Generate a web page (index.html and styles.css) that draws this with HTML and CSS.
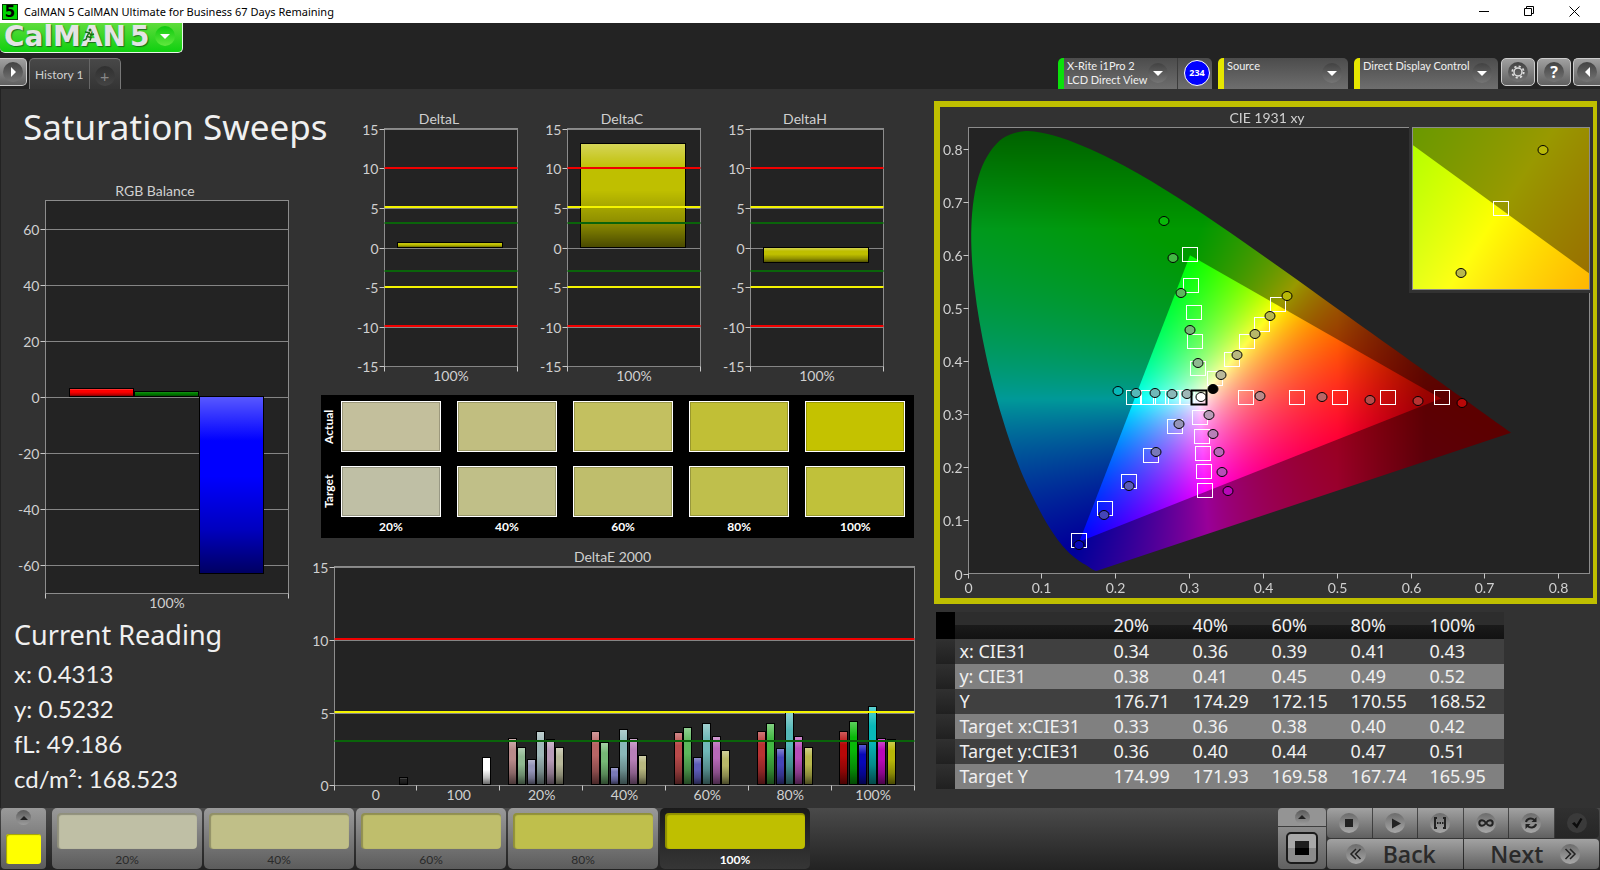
FILE: index.html
```html
<!DOCTYPE html>
<html lang="en">
<head>
    <meta charset="UTF-8">
    <meta name="viewport" content="width=device-width, initial-scale=1.0">
    <title>CalMAN 5 CalMAN Ultimate for Business 67 Days Remaining</title>
    <link rel="stylesheet" href="styles.css">
</head>
<body>
    <div class="titlebar">
        <span class="app-icon">5</span>
        <span class="app-title">CalMAN 5 CalMAN Ultimate for Business 67 Days Remaining</span>
        <div class="window-buttons">
            <button type="button" aria-label="Minimize"><svg width="11" height="11" viewBox="0 0 11 11"><path d="M0 5.5h10"/></svg></button>
            <button type="button" aria-label="Restore"><svg width="11" height="11" viewBox="0 0 11 11"><path d="M.5 2.5h7v7h-7zM2.500 2.500v-2h7v7h-2"/></svg></button>
            <button type="button" aria-label="Close"><svg width="11" height="11" viewBox="0 0 11 11"><path d="M.5.5l10 10M10.500.5l-10 10"/></svg></button>
        </div>
    </div>

    <header class="header">
        <button type="button" class="logo">
            <span class="logo-text">CalMAN</span>
            <svg class="runner" width="12" height="14" viewBox="0 0 12 14"><circle cx="7" cy="2" r="1.500"/><path d="M2 4l4 .5-2 4 4 1-1 3M6 5l2 2 3-1M4 8.500l-1 3-3 1"/></svg>
            <span class="logo-text">5</span>
            <span class="round green"><i class="arrow down"></i></span>
        </button>
        <div class="toolbar">
            <button type="button" class="square-btn first" aria-label="Show workflow"><span class="round"><i class="arrow right"></i></span></button>
            <div class="tabs">
                <button type="button" class="tab">History 1</button>
                <button type="button" class="tab add" aria-label="Add history"><span class="round faint">+</span></button>
            </div>
            <div class="devices">
                <div class="device green">
                    <button type="button" class="device-menu"><span>X-Rite i1Pro 2<br>LCD Direct View</span><span class="round"><i class="arrow down"></i></span></button>
                    <div class="device-badge"><span>234</span></div>
                </div>
                <div class="device source">
                    <button type="button" class="device-menu"><span>Source</span><span class="round"><i class="arrow down"></i></span></button>
                </div>
                <div class="device display">
                    <button type="button" class="device-menu"><span>Direct Display Control</span><span class="round"><i class="arrow down"></i></span></button>
                </div>
            </div>
            <button type="button" class="square-btn" aria-label="Settings">
                <span class="round"><svg width="14" height="14" viewBox="0 0 14 14" fill="none" stroke="#ddd"><circle cx="7" cy="7" r="4" stroke-width="1.500"/><circle cx="7" cy="7" r="5.700" stroke-width="1.800" stroke-dasharray="2.200 2.270"/></svg></span>
            </button>
            <button type="button" class="square-btn" aria-label="Help"><span class="round help">?</span></button>
            <button type="button" class="square-btn last" aria-label="Show panel"><span class="round"><i class="arrow left"></i></span></button>
        </div>
    </header>

    <main class="workspace">
        <section class="col-left">
            <h1>Saturation Sweeps</h1>
            <svg class="chart" id="rgbBalance"></svg>
            <div class="reading">
                <h2>Current Reading</h2>
                <p>x: 0.4313</p>
                <p>y: 0.5232</p>
                <p>fL: 49.186</p>
                <p>cd/m²: 168.523</p>
            </div>
        </section>

        <section class="col-middle">
            <div class="deltas">
                <svg class="chart" id="deltaL"></svg>
                <svg class="chart" id="deltaC"></svg>
                <svg class="chart" id="deltaH"></svg>
            </div>
            <div class="compare">
                <div class="compare-row">
                    <span class="row-label">Actual</span>
                    <div class="swatches">
                        <div class="swatch a20"></div>
                        <div class="swatch a40"></div>
                        <div class="swatch a60"></div>
                        <div class="swatch a80"></div>
                        <div class="swatch a100"></div>
                    </div>
                </div>
                <div class="compare-row">
                    <span class="row-label">Target</span>
                    <div class="swatches">
                        <div class="swatch t20"></div>
                        <div class="swatch t40"></div>
                        <div class="swatch t60"></div>
                        <div class="swatch t80"></div>
                        <div class="swatch t100"></div>
                    </div>
                </div>
                <div class="swatches captions">
                    <span>20%</span><span>40%</span><span>60%</span><span>80%</span><span>100%</span>
                </div>
            </div>
            <svg class="chart" id="deltaE"></svg>
        </section>

        <section class="col-right">
            <div class="cie">
                <canvas id="gamut"></canvas>
                <svg class="chart" id="cie"></svg>
            </div>
            <table class="readings">
                <thead>
                    <tr><th class="grip"></th><th></th><th>20%</th><th>40%</th><th>60%</th><th>80%</th><th>100%</th></tr>
                </thead>
                <tbody>
                    <tr><td class="grip"></td><th>x: CIE31</th><td>0.34</td><td>0.36</td><td>0.39</td><td>0.41</td><td>0.43</td></tr>
                    <tr><td class="grip"></td><th>y: CIE31</th><td>0.38</td><td>0.41</td><td>0.45</td><td>0.49</td><td>0.52</td></tr>
                    <tr><td class="grip"></td><th>Y</th><td>176.71</td><td>174.29</td><td>172.15</td><td>170.55</td><td>168.52</td></tr>
                    <tr><td class="grip"></td><th>Target x:CIE31</th><td>0.33</td><td>0.36</td><td>0.38</td><td>0.40</td><td>0.42</td></tr>
                    <tr><td class="grip"></td><th>Target y:CIE31</th><td>0.36</td><td>0.40</td><td>0.44</td><td>0.47</td><td>0.51</td></tr>
                    <tr><td class="grip"></td><th>Target Y</th><td>174.99</td><td>171.93</td><td>169.58</td><td>167.74</td><td>165.95</td></tr>
                </tbody>
            </table>
        </section>
    </main>

    <footer class="bottombar">
        <button type="button" class="current" aria-label="Current pattern"><span class="round small"><i class="arrow up"></i></span><span class="current-color"></span></button>
        <div class="patterns">
            <button type="button" class="pattern"><span class="chip t20"></span>20%</button>
            <button type="button" class="pattern"><span class="chip t40"></span>40%</button>
            <button type="button" class="pattern"><span class="chip t60"></span>60%</button>
            <button type="button" class="pattern"><span class="chip t80"></span>80%</button>
            <button type="button" class="pattern active"><span class="chip full"></span>100%</button>
        </div>
        <div class="pattern-window">
            <button type="button" class="window-up" aria-label="Pattern options"><span class="round small"><i class="arrow up"></i></span></button>
            <button type="button" class="window-size" aria-label="Pattern window"><span></span></button>
        </div>
        <div class="controls">
            <div class="control-row">
                <button type="button" aria-label="Stop"><svg class="disc" viewBox="0 0 20 20"><path d="M6 6h8v8H6z"/></svg></button>
                <button type="button" aria-label="Read"><svg class="disc" viewBox="0 0 20 20"><path d="M7 5.500l9 5-9 5z"/></svg></button>
                <button type="button" aria-label="Read series"><svg class="disc" viewBox="0 0 20 20"><path class="line" d="M7 5H5v10h2M13 5h2v10h-2M7 10h1.500M9.500 10h1.500M12 10h1.500"/></svg></button>
                <button type="button" aria-label="Read continuous"><svg class="disc" viewBox="0 0 20 20"><path class="line" d="M10 10C8.500 8 7.500 7.300 6 7.300a2.700 2.700 0 0 0 0 5.400c1.500 0 2.500-.7 4-2.700s2.500-2.700 4-2.700a2.700 2.700 0 0 1 0 5.400c-1.500 0-2.500-.7-4-2.700z"/></svg></button>
                <button type="button" aria-label="Refresh"><svg class="disc" viewBox="0 0 20 20"><path class="line" d="M5 9c.5-3 5-5 8.500-2M15 11c-.5 3-5 5-8.500 2"/><path d="M15.500 4v5h-5zM4.500 16v-5h5z"/></svg></button>
                <button type="button" class="dark" aria-label="Done"><svg class="disc" viewBox="0 0 20 20"><path d="M5 10.500l2.500-1.500 2 2.500L13.500 5l2 1-5.500 9.500z"/></svg></button>
            </div>
            <div class="control-row nav">
                <button type="button"><svg class="disc" viewBox="0 0 20 20"><path class="thin" d="M10 5l-5 5 5 5M14.500 5l-5 5 5 5"/></svg>Back</button>
                <button type="button">Next<svg class="disc" viewBox="0 0 20 20"><path class="thin" d="M5.500 5l5 5-5 5M10 5l5 5-5 5"/></svg></button>
            </div>
        </div>
    </footer>

    <script src="charts.js"></script>
</body>
</html>
```
FILE: styles.css
```css
* {
    box-sizing: border-box;
}
body {
    margin: 0;
    min-height: 100vh;
    display: flex;
    flex-direction: column;
    background: #323232;
    color: #f0f0f0;
    font-family: Lato, "Open Sans", sans-serif;
    font-size: 14px;
}
button {
    border: none;
    padding: 0;
    margin: 0;
    background: none;
    color: inherit;
    font: inherit;
    cursor: pointer;
}

/* window title */
.titlebar {
    display: flex;
    align-items: center;
    height: 23px;
    padding: 0 3px 0 2px;
    background: #fff;
    color: #000;
    font: 11px "Noto Sans", sans-serif;
}
.app-icon {
    width: 16px;
    height: 16px;
    margin-right: 6px;
    background: #00d800;
    border: 1px solid #033f03;
    font: bold 15px/14px "DejaVu Sans", sans-serif;
    text-align: center;
}
.window-buttons {
    margin-left: auto;
    display: flex;
}
.window-buttons button {
    width: 45px;
    height: 21px;
    display: flex;
    align-items: center;
    justify-content: center;
}
.window-buttons svg {
    fill: none;
    stroke: #000;
}

/* header */
.header {
    background: #232323;
    height: 66px;
    display: flex;
    flex-direction: column;
    justify-content: space-between;
    align-items: flex-start;
}
.logo {
    position: relative;
    width: 183px;
    height: 30px;
    padding: 0 7px 3px 4px;
    display: flex;
    align-items: center;
    background: linear-gradient(#5fdc3c, #0fd00f);
    border: solid #e8f5e8;
    border-width: 0 1px 1px 0;
    border-radius: 0 0 5px 5px;
}
.logo-text {
    font: bold 28px/27px "DejaVu Sans", sans-serif;
    margin-right: 4px;
    color: #e4e4e4;
    text-shadow: 1px 1px 1px #1c6e1c;
}
.logo .round {
    margin-left: auto;
}
.runner {
    position: absolute;
    left: 83px;
    top: 5px;
    fill: #187018;
    stroke: none;
}
.runner path {
    fill: none;
    stroke: #187018;
    stroke-width: 1.5;
}
.round {
    width: 20px;
    height: 20px;
    border-radius: 50%;
    display: flex;
    align-items: center;
    justify-content: center;
    background: linear-gradient(#424242, #757575);
    flex: none;
}
.round.green {
    background: linear-gradient(#0cc90c, #62e83e);
}
.round.faint {
    background: linear-gradient(#303030, #444);
    color: #888;
    font-size: 16px;
}
.round.help {
    font: bold 16px "Noto Sans", sans-serif;
    color: #fff;
}
.round.small {
    width: 15px;
    height: 15px;
    background: linear-gradient(#5a5a5a, #9c9c9c);
}
.arrow {
    border: 5px solid transparent;
}
.arrow.down {
    border-top-color: #fff;
    border-bottom-width: 0;
}
.arrow.up {
    border-width: 0 4px 4px;
    border-bottom-color: #222;
}
.arrow.right {
    border-left-color: #fff;
    border-right-width: 0;
}
.arrow.left {
    border-right-color: #fff;
    border-left-width: 0;
}
.toolbar {
    display: flex;
    width: 100%;
    height: 31px;
    align-items: flex-start;
    overflow: hidden;
}
.square-btn {
    width: 34px;
    height: 28px;
    margin-left: 2px;
    display: flex;
    align-items: center;
    justify-content: center;
    border: 1px solid #ccc;
    border-radius: 5px;
    background: linear-gradient(#a0a0a0, #606060);
    flex: none;
}
.square-btn.first {
    width: 27px;
    margin: 0 2px 0 0;
    border-left: none;
    border-radius: 0 5px 5px 0;
}
.square-btn.last {
    width: 27px;
    border-right: none;
    border-radius: 5px 0 0 5px;
}
.tabs {
    display: flex;
    height: 31px;
    border: solid #777;
    border-width: 1px 1px 0;
    border-radius: 5px 5px 0 0;
    background: linear-gradient(#484848, #343434);
    color: #d0d0d0;
    font-size: 12px;
}
.tab {
    padding: 0 5px;
}
.tab.add {
    width: 31px;
    border-left: 1px solid #666;
    padding: 3px 5px 0;
}
.devices {
    margin-left: auto;
    display: flex;
    gap: 6px;
    height: 31px;
    font-size: 11px;
    line-height: 14px;
}
.device {
    display: flex;
    border-left: 6px solid #e6e600;
    border-radius: 5px 5px 0 0;
    background: linear-gradient(#4c4c4c, #6e6e6e);
}
.device.green {
    width: 154px;
    border-left-color: #0be00b;
}
.device.source {
    width: 130px;
}
.device.display {
    width: 144px;
    margin-right: 1px;
}
.device-menu {
    flex: 1;
    display: flex;
    justify-content: space-between;
    align-items: flex-start;
    text-align: left;
    white-space: nowrap;
    padding: 1px 6px 0 3px;
}
.device-menu .round {
    margin-top: 4px;
}
.device.green .device-menu {
    padding-right: 9px;
}
.device-badge {
    width: 35px;
    padding: 2px 2px 2px 6px;
    border-left: 1px solid #3c3c3c;
}
.device-badge span {
    display: block;
    width: 26px;
    height: 26px;
    border: 1px solid #fff;
    border-radius: 50%;
    background: #00f;
    color: #fff;
    font: bold 9px/24px "Open Sans", sans-serif;
    text-align: center;
}

/* workspace */
.workspace {
    flex: 1;
    display: grid;
    grid-template-columns: 320fr 614fr 666fr;
    border-left: 1px solid #222;
}
.workspace section {
    display: flex;
    flex-direction: column;
    min-width: 0;
}
h1, h2, p {
    margin: 0;
    font-weight: normal;
}
h1, h2 {
    font-family: "Noto Sans", "Open Sans", sans-serif;
}
h1 {
    font-size: 35px;
    line-height: 44px;
    padding: 16px 0 0 22px;
    height: 89px;
    white-space: nowrap;
}
.chart {
    display: block;
    width: 100%;
    height: 0;
    flex: 1;
    overflow: visible;
}
.reading {
    height: 194px;
    padding: 3px 0 0 13px;
    font-size: 24px;
    line-height: 35px;
}
.reading h2 {
    font-size: 27px;
    line-height: 35px;
    margin-bottom: 4px;
}
.col-middle {
    padding-top: 19px;
}
.deltas {
    flex: 280 1 0;
    display: grid;
    grid-template-columns: repeat(3, 1fr);
    padding: 0 50px 0 15px;
}
.deltas .chart {
    height: 100%;
}
#deltaE {
    flex: 263 1 0;
}
.compare {
    margin: 7px 20px 7px 0;
    padding: 6px 9px 6px 0;
    background: #000;
    color: #fff;
    font-size: 12px;
    font-weight: bold;
}
.compare-row {
    display: flex;
    height: 51px;
    margin-bottom: 14px;
}
.compare-row + .compare-row {
    margin-bottom: 2px;
}
.row-label {
    width: 20px;
    writing-mode: vertical-rl;
    transform: rotate(180deg);
    text-align: center;
    line-height: 16px;
}
.swatches {
    flex: 1;
    display: grid;
    grid-template-columns: repeat(5, 1fr);
    gap: 16px;
}
.swatch {
    border: 1px solid #fff;
    box-shadow: inset 0 0 0 1px rgba(0, 0, 0, .2);
}
.captions {
    padding-left: 20px;
    text-align: center;
    line-height: 15px;
    height: 13px;
}
.a20 { background: #c3bf9c; }
.a40 { background: #c1be80; }
.a60 { background: #c3c060; }
.a80 { background: #c1bf36; }
.a100 { background: #c4c200; }
.t20 { background: #bfbfa5; }
.t40 { background: #c0bf88; }
.t60 { background: #bfbe6c; }
.t80 { background: #bfbf4c; }
.t100 { background: #c0c13a; }
.full { background: #bfbf00; }

.col-right {
    padding: 12px 3px 19px 0;
}
.cie {
    position: relative;
    flex: 1;
    display: flex;
    border: 6px solid #bfbf00;
    border-right-width: 4px;
}
.cie canvas {
    position: absolute;
    inset: 0;
}
.cie .chart {
    position: relative;
    height: auto;
}
.readings {
    width: 568px;
    margin: 8px 0 0 2px;
    border-collapse: collapse;
    table-layout: fixed;
    font: 18px/24px "Noto Sans", sans-serif;
}
.readings th,
.readings td {
    height: 25px;
    padding: 0 0 1px 4px;
    font-weight: normal;
    text-align: left;
    width: 79px;
    white-space: nowrap;
    line-height: 24px;
}
.readings thead th {
    height: 27px;
}
.readings thead tr {
    background: linear-gradient(#2d2d2d 48%, #1a1a1a 50%, #121212);
}
.readings thead th:nth-child(2) {
    width: 154px;
}
.readings thead .grip {
    width: 19px;
    background: #000;
}
.readings tbody .grip {
    background: linear-gradient(#303030, #202020);
}
.readings tbody tr {
    background: #404040;
}
.readings tbody tr:nth-child(even) {
    background: #808080;
}

/* chart parts */
.chart text {
    fill: #d0d0d0;
    font-size: 14px;
}
.plot {
    fill: #232323;
    stroke: #8c8c8c;
}
.plot.clear {
    fill: none;
}
.grid {
    stroke: #858585;
}
.tick {
    stroke: #c8c8c8;
}
.bar {
    stroke: #000;
}
.limit-red {
    stroke: #f00000;
    stroke-width: 2;
}
.limit-yellow {
    stroke: #f4f400;
    stroke-width: 2;
}
.limit-green {
    stroke: #0a640a;
    stroke-width: 2;
}
.target {
    fill: none;
    stroke: #fff;
}
.target.white-point {
    stroke: #000;
    stroke-width: 2;
}
.measured {
    stroke: #000;
}
.inset-back {
    fill: none;
    stroke: #323232;
    stroke-width: 3;
}

/* bottom bar */
.bottombar {
    height: 62px;
    display: flex;
    padding: 0 1px;
    background: linear-gradient(#4a4a4a, #222);
}
.current {
    width: 45px;
    height: 61px;
    padding: 2px 5px 5px;
    display: flex;
    flex-direction: column;
    justify-content: space-between;
    align-items: center;
    border-radius: 4px;
    background: linear-gradient(#9a9a9a, #5c5c5c);
}
.current-color {
    width: 35px;
    height: 30px;
    border-radius: 3px;
    background: #ff0;
    box-shadow: inset 1px 1px 1px #a0a000;
}
.patterns {
    display: flex;
    gap: 2px;
    margin-left: 6px;
}
.pattern {
    width: 150px;
    height: 61px;
    padding: 5px 5px 0;
    border-radius: 5px;
    background: linear-gradient(#9a9a9a, #5c5c5c);
    color: #2a2a2a;
    font-size: 12px;
    line-height: 22px;
}
.pattern.active {
    background: linear-gradient(#1a1a1a, #363636);
    color: #fff;
    font-weight: bold;
}
.chip {
    display: block;
    height: 36px;
    border-radius: 4px;
    box-shadow: inset 1px 1px 1px 1px rgba(0, 0, 0, .25);
}
.pattern-window {
    margin-left: auto;
    width: 48px;
    height: 61px;
    margin-right: 1px;
    display: flex;
    flex-direction: column;
    gap: 1px;
    border-radius: 4px;
    overflow: hidden;
}
.window-up {
    height: 18px;
    background: #949494;
    display: flex;
    justify-content: center;
    align-items: center;
}
.window-size {
    flex: 1;
    display: flex;
    justify-content: center;
    align-items: center;
    background: linear-gradient(#8c8c8c, #606060);
}
.window-size span {
    width: 32px;
    height: 32px;
    border: 2px solid #1a1a1a;
    border-radius: 5px;
    background: linear-gradient(#1e1e1e 50%, #000 50%) center / 14px 14px no-repeat, linear-gradient(#a8a8a8 50%, #8a8a8a 50%);
}
.controls {
    width: 272px;
    display: flex;
    flex-direction: column;
    gap: 1px;
}
.control-row {
    height: 30px;
    display: flex;
    gap: 1px;
}
.control-row button {
    flex: 1;
    display: flex;
    align-items: center;
    justify-content: center;
    background: linear-gradient(#a2a2a2, #606060);
}
.control-row button.dark {
    background: linear-gradient(#303030, #262626);
}
.control-row.nav button {
    font: 600 23px/28px "Open Sans", sans-serif;
    color: #2a2a2a;
    gap: 17px;
}
.control-row.nav button:first-child {
    padding-right: 8px;
}
.control-row.nav button:last-child {
    padding-left: 8px;
}
.control-row button:first-child {
    border-radius: 4px 0 0 4px;
}
.control-row button:last-child {
    border-radius: 0 4px 4px 0;
}
.disc {
    width: 20px;
    height: 20px;
    border-radius: 50%;
    background: linear-gradient(#6c6c6c, #a8a8a8);
    fill: #222;
}
.dark .disc {
    background: #3a3a3a;
    fill: #0c0c0c;
}
.disc .line {
    fill: none;
    stroke: #222;
    stroke-width: 2;
}
.disc .thin {
    fill: none;
    stroke: #222;
    stroke-width: 1.5;
}
```
FILE: charts.js
```js
const NS = 'http://www.w3.org/2000/svg';

function add(parent, tag, attrs, text) {
    const el = document.createElementNS(NS, tag);
    for (const key in attrs) el.setAttribute(key, attrs[key]);
    if (text !== undefined) el.textContent = text;
    parent.appendChild(el);
    return el;
}

function line(svg, cls, x1, y1, x2, y2) {
    add(svg, 'line', { class: cls, x1, y1, x2, y2 });
}

// light at the top, dark at the bottom, laid over the bar colour
function addShade(svg) {
    const grad = add(add(svg, 'defs', {}), 'linearGradient', { id: 'shade-' + svg.id, x1: 0, y1: 0, x2: 0, y2: 1 });
    [[0, '#fff', .35], [.25, '#fff', 0], [.45, '#000', 0], [.75, '#000', .25], [1, '#000', .62]].forEach(s => {
        add(grad, 'stop', { offset: s[0], 'stop-color': s[1], 'stop-opacity': s[2] });
    });
}

function frame(svg, title, m, clear) {
    svg.innerHTML = '';
    addShade(svg);
    const box = svg.getBoundingClientRect();
    const p = {
        x: m.l + .5,
        y: m.t + .5,
        w: Math.round(box.width) - m.l - m.r - 1,
        h: Math.round(box.height) - m.t - m.b - 1
    };
    add(svg, 'rect', { class: clear ? 'plot clear' : 'plot', x: p.x, y: p.y, width: p.w, height: p.h });
    add(svg, 'text', { x: p.x + p.w / 2 - 12, y: m.t - 4, 'text-anchor': 'middle' }, title);
    return p;
}

function barChart(id, cfg) {
    const svg = document.getElementById(id);
    const p = frame(svg, cfg.title, cfg.margin);
    const toY = v => p.y + (cfg.max - v) / (cfg.max - cfg.min) * p.h;

    cfg.ticks.forEach(v => {
        const y = Math.min(Math.round(toY(v)) + .5, p.y + p.h);
        line(svg, 'grid', p.x, y, p.x + p.w, y);
        line(svg, 'tick', p.x - 5, y, p.x, y);
        add(svg, 'text', { x: p.x - 6, y: y + 5, 'text-anchor': 'end' }, v);
    });

    const catW = p.w / cfg.groups.length;
    cfg.groups.forEach((group, i) => {
        const left = p.x + i * catW;
        const slot = catW * .8 / cfg.slots;
        group.bars.forEach(b => {
            const y0 = toY(0);
            const y1 = toY(b[0]);
            const rect = {
                class: 'bar',
                x: Math.floor(left + catW * .1 + b[2] * slot) + .5,
                y: Math.round(Math.min(y0, y1)) - .5,
                width: Math.max(Math.round(slot) - 1, 1),
                height: Math.round(Math.abs(y1 - y0))
            };
            add(svg, 'rect', Object.assign({ fill: b[1] }, rect));
            add(svg, 'rect', Object.assign({ fill: 'url(#shade-' + id + ')' }, rect));
        });
        add(svg, 'text', { x: left + catW / 2, y: p.y + p.h + 14, 'text-anchor': 'middle' }, group.label);
    });
    for (let i = 0; i <= cfg.groups.length; i++) {
        const x = Math.round(p.x + i * catW) - .5;
        line(svg, 'tick', x, p.y + p.h, x, p.y + p.h + 5);
    }

    (cfg.limits || []).forEach(l => {
        const y = Math.floor(toY(l[0]));
        line(svg, 'limit-' + l[1], p.x, y, p.x + p.w, y);
    });
}

// colours per saturation step: red, green, blue, cyan, magenta, yellow
const palette = [
    ['#b88a8a', '#8fb890', '#9494b8', '#9fb8b8', '#b89cb8', '#b8b89a'],
    ['#b86565', '#75b875', '#7878b8', '#8ab8b8', '#b880b8', '#b8b880'],
    ['#b84a4a', '#5cb85c', '#5c5cb8', '#70b8b8', '#b868b8', '#b8b868'],
    ['#b83232', '#43b843', '#4545b8', '#55b8b8', '#b84db8', '#b8b84d'],
    ['#b80808', '#08b808', '#0808b8', '#08b8b8', '#b808b8', '#b8b808']
];

const deltaE = [
    [3.16, 2.54, 1.72, 3.66, 3.09, 2.54],
    [3.66, 2.88, 1.17, 3.78, 3.16, 2.01],
    [3.57, 3.91, 1.85, 4.19, 3.30, 2.33],
    [3.66, 4.19, 2.47, 4.94, 3.30, 2.54],
    [3.66, 4.32, 2.75, 5.35, 3.16, 3.09]
];

const targets = [
    [.2995, .6015], [.3018, .5430], [.3050, .4915], [.3072, .4361], [.3108, .3852],
    [.4193, .5055], [.3974, .4682], [.3776, .4361], [.3568, .4028], [.3334, .3669],
    [.3757, .3304], [.4443, .3304], [.5025, .3304], [.5684, .3304], [.6406, .3304],
    [.2238, .3304], [.2436, .3304], [.2603, .3304], [.2770, .3304], [.2959, .3304],
    [.2802, .2764], [.2468, .2223], [.2170, .1726], [.1854, .1210], [.1503, .0613],
    [.3140, .2940], [.3162, .2581], [.3180, .2260], [.3194, .1921], [.3207, .1562]
];

// same order as the palette, 20% to 100%
const measured = [
    [[.3947, .3342], [.4782, .3330], [.5431, .3279], [.6090, .3260], [.6690, .3210]],
    [[.3104, .3977], [.2995, .4594], [.2874, .5292], [.2770, .5952], [.2644, .6650]],
    [[.2851, .2826], [.2544, .2292], [.2175, .1657], [.1832, .1109], [.1503, .0543]],
    [[.2959, .3393], [.2752, .3393], [.2526, .3411], [.2274, .3405], [.2030, .3437]],
    [[.3262, .2984], [.3316, .2632], [.3388, .2286], [.3438, .1921], [.3514, .1562]],
    [[.3424, .3751], [.3636, .4122], [.3884, .4525], [.4081, .4855], [.4311, .5236]]
];

// CIE 1931 spectral locus
const locus = [
    [.1741, .0050], [.1714, .0051], [.1689, .0069], [.1644, .0109], [.1566, .0177],
    [.1510, .0227], [.1440, .0297], [.1355, .0399], [.1241, .0578], [.1096, .0868], [.0913, .1327],
    [.0687, .2007], [.0454, .2950], [.0235, .4127], [.0082, .5384], [.0039, .6548], [.0139, .7502],
    [.0389, .8120], [.0743, .8338], [.1142, .8262], [.1547, .8059], [.1929, .7816], [.2296, .7543],
    [.2658, .7243], [.3016, .6923], [.3373, .6589], [.3731, .6245], [.4087, .5896], [.4441, .5547],
    [.4788, .5202], [.5125, .4866], [.5448, .4544], [.5752, .4242], [.6029, .3965], [.6270, .3725],
    [.6482, .3514], [.6658, .3340], [.6915, .3083], [.7079, .2920], [.7190, .2809], [.7347, .2653]
];
const rec709 = [[.64, .33], [.30, .60], [.15, .06]];

function xyColor(x, y) {
    const X = x / y, Z = (1 - x - y) / y;
    const rgb = [
        3.2406 * X - 1.5372 - .4986 * Z,
        -.9689 * X + 1.8758 + .0415 * Z,
        .0557 * X - .2040 + 1.0570 * Z
    ].map(c => Math.max(c, 0));
    const top = Math.max(rgb[0], rgb[1], rgb[2]);
    let level = 255;
    if (x > .5) level *= 1 - .4 * Math.min((x - .5) / .12, 1);
    if (y > .65) level *= 1 - .35 * (y - .65) / .18;
    return rgb.map(c => level * c / top);
}

// smooth curve through the points (Catmull-Rom), or straight edges
function tracePath(ctx, pts, toX, toY, smooth) {
    const at = i => pts[Math.max(0, Math.min(pts.length - 1, i))];
    ctx.beginPath();
    ctx.moveTo(toX(pts[0][0]), toY(pts[0][1]));
    for (let i = 1; i < pts.length; i++) {
        const a = at(i - 2), b = at(i - 1), c = at(i), d = at(i + 1);
        if (smooth) {
            ctx.bezierCurveTo(
                toX(b[0] + (c[0] - a[0]) / 6), toY(b[1] + (c[1] - a[1]) / 6),
                toX(c[0] - (d[0] - b[0]) / 6), toY(c[1] - (d[1] - b[1]) / 6),
                toX(c[0]), toY(c[1])
            );
        } else {
            ctx.lineTo(toX(c[0]), toY(c[1]));
        }
    }
    ctx.closePath();
}

function drawGamut(ctx, r, view) {
    const w = Math.round(r.w), h = Math.round(r.h);
    const toX = x => r.x + (x - view.x0) / (view.x1 - view.x0) * r.w;
    const toY = y => r.y + (view.y1 - y) / (view.y1 - view.y0) * r.h;
    [.6, 1].forEach(level => {
        const layer = document.createElement('canvas');
        layer.width = w;
        layer.height = h;
        const lctx = layer.getContext('2d');
        const img = lctx.createImageData(w, h);
        for (let j = 0; j < h; j++) {
            const y = Math.max(view.y1 - (j + .5) / h * (view.y1 - view.y0), .001);
            for (let i = 0; i < w; i++) {
                const x = view.x0 + (i + .5) / w * (view.x1 - view.x0);
                const c = xyColor(x, y);
                const k = (j * w + i) * 4;
                img.data[k] = c[0] * level;
                img.data[k + 1] = c[1] * level;
                img.data[k + 2] = c[2] * level;
                img.data[k + 3] = 255;
            }
        }
        lctx.putImageData(img, 0, 0);
        ctx.save();
        ctx.beginPath();
        ctx.rect(r.x, r.y, r.w, r.h);
        ctx.clip();
        tracePath(ctx, level === 1 ? rec709 : locus, toX, toY, level !== 1);
        ctx.clip();
        ctx.drawImage(layer, r.x, r.y);
        ctx.restore();
    });
}

function drawPoints(svg, r, view) {
    const inside = p => p[0] > view.x0 && p[0] < view.x1 && p[1] > view.y0 && p[1] < view.y1;
    const toX = x => Math.round(r.x + (x - view.x0) / (view.x1 - view.x0) * r.w);
    const toY = y => Math.round(r.y + (view.y1 - y) / (view.y1 - view.y0) * r.h);
    const square = (p, cls) => add(svg, 'rect', { class: cls, x: toX(p[0]) - 7.5, y: toY(p[1]) - 7.5, width: 15, height: 14 });
    const dot = (p, fill) => add(svg, 'ellipse', { class: 'measured', cx: toX(p[0]), cy: toY(p[1]), rx: 5, ry: 4.5, fill });

    targets.filter(inside).forEach(p => square(p, 'target'));
    measured.forEach((series, c) => series.forEach((p, i) => {
        if (inside(p)) dot(p, palette[i][c]);
    }));
    if (inside([.3121, .3304])) {
        square([.3121, .3304], 'target white-point');
        dot([.3153, .3330], '#fff');
        dot([.3311, .3487], '#000');
    }
}

function drawCie() {
    const svg = document.getElementById('cie');
    const canvas = document.getElementById('gamut');
    const box = svg.getBoundingClientRect();
    canvas.width = box.width;
    canvas.height = box.height;
    const ctx = canvas.getContext('2d');
    const p = frame(svg, 'CIE 1931 xy', { t: 20, r: 3, b: 24, l: 28 }, true);
    const view = { x0: 0, x1: .841, y0: 0, y1: .841 };

    ctx.fillStyle = '#232323';
    ctx.fillRect(p.x, p.y, p.w, p.h);
    drawGamut(ctx, p, view);

    for (let i = 0; i <= 8; i++) {
        const x = Math.round(p.x + i / 8.41 * p.w) - .5;
        const y = Math.round(p.y + p.h - i / 8.41 * p.h) + .5;
        const label = i ? '0.' + i : '0';
        line(svg, 'tick', x, p.y + p.h, x, p.y + p.h + 5);
        line(svg, 'tick', p.x - 5, y, p.x, y);
        add(svg, 'text', { x, y: p.y + p.h + 19, 'text-anchor': 'middle' }, label);
        add(svg, 'text', { x: p.x - 6, y: y + 5, 'text-anchor': 'end' }, label);
    }
    drawPoints(svg, p, view);

    // magnified view round the selected target
    const inset = { x: p.x + p.w - 177, y: p.y, w: 177, h: 162 };
    const near = { x0: .3943, x1: .4443, y0: .4805, y1: .5305 };
    add(svg, 'rect', { class: 'inset-back', x: inset.x - 2, y: inset.y - 2, width: inset.w + 4, height: inset.h + 4 });
    drawGamut(ctx, inset, near);
    add(svg, 'rect', { class: 'plot clear', x: inset.x, y: inset.y, width: inset.w, height: inset.h });
    drawPoints(svg, inset, near);
}

function drawAll() {
    barChart('rgbBalance', {
        title: 'RGB Balance', margin: { t: 22, r: 32, b: 20, l: 44 },
        min: -70, max: 70, ticks: [60, 40, 20, 0, -20, -40, -60], slots: 3,
        groups: [{ label: '100%', bars: [[2.8, '#ff0000', 0], [1.8, '#008000', 1], [-63.2, '#0000ff', 2]] }]
    });

    const limits = [[10, 'red'], [5, 'yellow'], [3, 'green'], [-3, 'green'], [-5, 'yellow'], [-10, 'red']];
    [['L', .6], ['C', 13.1], ['H', -1.9]].forEach(d => barChart('delta' + d[0], {
        title: 'Delta' + d[0], margin: { t: 20, r: 1, b: 21, l: 48 },
        min: -15, max: 15, ticks: [15, 10, 5, 0, -5, -10, -15], slots: 1,
        groups: [{ label: '100%', bars: [[d[1], '#bfbf00', 0]] }],
        limits: limits
    }));

    const groups = [
        { label: '0', bars: [[.48, '#222', 6]] },
        { label: '100', bars: [[1.85, '#fff', 6]] }
    ];
    deltaE.forEach((row, i) => groups.push({
        label: (i + 1) * 20 + '%',
        bars: row.map((v, c) => [v, palette[i][c], c])
    }));
    barChart('deltaE', {
        title: 'DeltaE 2000', margin: { t: 21, r: 20, b: 22, l: 13 },
        min: 0, max: 15, ticks: [15, 10, 5, 0], slots: 7,
        groups: groups,
        limits: [[10, 'red'], [5, 'yellow'], [3, 'green']]
    });

    drawCie();
}

drawAll();
window.addEventListener('resize', drawAll);
```
